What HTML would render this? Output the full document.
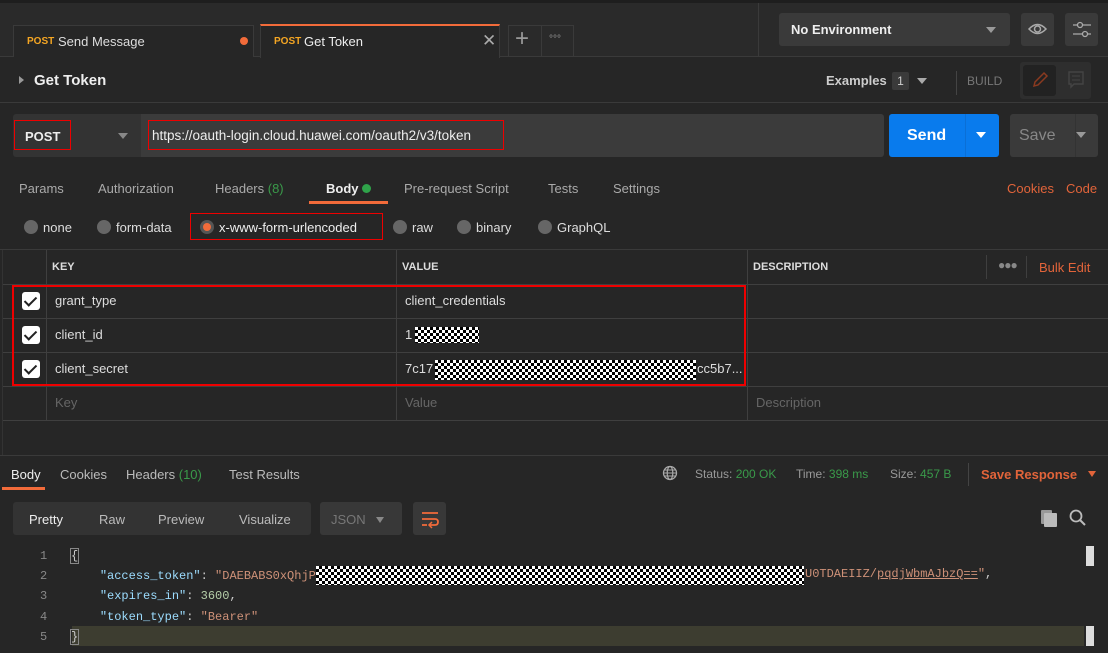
<!DOCTYPE html>
<html><head><meta charset="utf-8"><style>
*{box-sizing:border-box;margin:0;padding:0}
body{width:1108px;height:653px;background:#262626;font-family:"Liberation Sans",sans-serif;font-size:13px;color:#ccc;position:relative;overflow:hidden}
.a{position:absolute}
.chk{background:repeating-conic-gradient(#000 0 25%,#fff 0 50%) 0 0/6px 6px}
.red{border:1.5px solid #e00;z-index:5}
.cb{width:18px;height:18px;background:#fff;border-radius:3px}
.cb:after{content:"";position:absolute;left:5px;top:2px;width:5px;height:10px;border:solid #222;border-width:0 2.5px 2.5px 0;transform:rotate(45deg)}
.rd{width:14px;height:14px;border-radius:50%;background:#666}
.mono{font-family:"Liberation Mono",monospace;font-size:12px}
</style></head><body>
<div class="a" style="left:0;top:0;width:1108px;height:57px;background:#2a2a2a;border-bottom:1px solid #3a3a3a"></div>
<div class="a" style="left:0;top:0;width:1108px;height:3px;background:#1e1e1e"></div>
<!-- tabs -->
<div class="a" style="left:13px;top:25px;width:241px;height:32px;background:#262626;border:1px solid #3a3a3a;border-bottom:0"></div>
<div class="a" style="left:27px;top:36px;font-size:10px;font-weight:bold;color:#f5a623">POST</div>
<div class="a" style="left:58px;top:34px;color:#ddd">Send Message</div>
<div class="a" style="left:240px;top:37px;width:8px;height:8px;border-radius:50%;background:#f26b3a"></div>
<div class="a" style="left:260px;top:24px;width:240px;height:34px;background:#262626;border-top:2px solid #f26b3a;border-left:1px solid #3a3a3a;border-right:1px solid #3a3a3a"></div>
<div class="a" style="left:274px;top:36px;font-size:10px;font-weight:bold;color:#f5a623">POST</div>
<div class="a" style="left:304px;top:34px;color:#eee">Get Token</div>
<div class="a" style="left:482px;top:31px;color:#aaa;font-size:17px">✕</div>
<div class="a" style="left:508px;top:25px;width:66px;height:32px;border:1px solid #3a3a3a;border-bottom:0"></div>
<div class="a" style="left:541px;top:25px;width:1px;height:32px;background:#3a3a3a"></div>
<div class="a" style="left:515px;top:25px;color:#999;font-size:24px;font-weight:300">+</div>
<div class="a" style="left:549px;top:34px;color:#999;font-size:10px">°°°</div>
<div class="a" style="left:758px;top:3px;width:1px;height:54px;background:#3a3a3a"></div>
<div class="a" style="left:779px;top:13px;width:231px;height:33px;background:#3a3a3a;border-radius:3px"></div>
<div class="a" style="left:791px;top:22px;color:#eee;font-weight:bold;font-size:13px">No Environment</div>
<div class="a" style="left:986px;top:27px;border:5px solid transparent;border-top:6px solid #999"></div>
<div class="a" style="left:1021px;top:13px;width:33px;height:33px;background:#3a3a3a;border-radius:3px"></div>
<svg class="a" style="left:1027px;top:20px" width="21" height="18"><path d="M2 9Q10.5 0 19 9Q10.5 18 2 9Z" fill="none" stroke="#aaa" stroke-width="1.5"/><circle cx="10.5" cy="9" r="3" fill="none" stroke="#aaa" stroke-width="1.5"/></svg>
<div class="a" style="left:1065px;top:13px;width:33px;height:33px;background:#3a3a3a;border-radius:3px"></div>
<svg class="a" style="left:1071px;top:20px" width="22" height="20"><path d="M2 5H20M2 14H20" stroke="#aaa" stroke-width="1.3"/><circle cx="9" cy="5" r="2.5" fill="#3a3a3a" stroke="#aaa" stroke-width="1.3"/><circle cx="14" cy="14" r="2.5" fill="#3a3a3a" stroke="#aaa" stroke-width="1.3"/></svg>
<!-- title -->
<div class="a" style="left:19px;top:76px;border:4px solid transparent;border-left:5px solid #999"></div>
<div class="a" style="left:34px;top:72px;color:#eee;font-weight:bold;font-size:15px">Get Token</div>
<div class="a" style="left:826px;top:73px;color:#ccc;font-weight:bold;font-size:13px">Examples</div>
<div class="a" style="left:892px;top:72px;width:17px;height:18px;background:#3a3a3a;border-radius:2px;color:#ccc;font-size:12px;text-align:center;line-height:18px">1</div>
<div class="a" style="left:917px;top:78px;border:5px solid transparent;border-top:6px solid #aaa"></div>
<div class="a" style="left:956px;top:71px;width:1px;height:24px;background:#444"></div>
<div class="a" style="left:967px;top:74px;color:#777;font-size:12px">BUILD</div>
<div class="a" style="left:1020px;top:62px;width:71px;height:37px;background:#2e2e2e;border-radius:3px"></div>
<div class="a" style="left:1023px;top:65px;width:33px;height:31px;background:#222;border-radius:3px"></div>
<svg class="a" style="left:1030px;top:70px" width="20" height="20"><path d="M4 16L5 12L14 3L17 6L8 15Z" fill="none" stroke="#8a3a20" stroke-width="1.5"/></svg>
<svg class="a" style="left:1067px;top:70px" width="18" height="20"><path d="M2 2H16V14H7L4 17V14H2Z" fill="none" stroke="#444" stroke-width="1.4"/><path d="M5 6H13M5 10H13" stroke="#444"/></svg>
<div class="a" style="left:0;top:102px;width:1108px;height:1px;background:#3a3a3a"></div>
<!-- url bar -->
<div class="a" style="left:13px;top:114px;width:128px;height:43px;background:#333;border-radius:3px 0 0 3px"></div>
<div class="a" style="left:141px;top:114px;width:743px;height:43px;background:#3b3b3b;border-radius:0 3px 3px 0"></div>
<div class="a red" style="left:14px;top:120px;width:57px;height:30px"></div>
<div class="a" style="left:25px;top:129px;color:#eee;font-weight:bold">POST</div>
<div class="a" style="left:118px;top:133px;border:5px solid transparent;border-top:6px solid #888"></div>
<div class="a red" style="left:148px;top:120px;width:356px;height:30px"></div>
<div class="a" style="left:152px;top:128px;color:#eee;font-size:13.5px">https://oauth-login.cloud.huawei.com/oauth2/v3/token</div>
<div class="a" style="left:889px;top:114px;width:110px;height:43px;background:#097bed;border-radius:3px"></div>
<div class="a" style="left:965px;top:114px;width:1px;height:43px;background:#0a6fd6"></div>
<div class="a" style="left:907px;top:127px;color:#fff;font-weight:bold;font-size:16px">Send</div>
<div class="a" style="left:976px;top:132px;border:5px solid transparent;border-top:6px solid #fff"></div>
<div class="a" style="left:1010px;top:114px;width:88px;height:43px;background:#3a3a3a;border-radius:3px"></div>
<div class="a" style="left:1075px;top:114px;width:1px;height:43px;background:#333"></div>
<div class="a" style="left:1019px;top:127px;color:#888;font-size:16px">Save</div>
<div class="a" style="left:1076px;top:132px;border:5px solid transparent;border-top:6px solid #999"></div>
<!-- req tabs -->
<div class="a" style="left:19px;top:181px;color:#aaa">Params</div>
<div class="a" style="left:98px;top:181px;color:#aaa">Authorization</div>
<div class="a" style="left:215px;top:181px;color:#aaa">Headers <span style="color:#3a9a4a">(8)</span></div>
<div class="a" style="left:326px;top:181px;color:#eee;font-weight:bold">Body</div>
<div class="a" style="left:362px;top:184px;width:9px;height:9px;border-radius:50%;background:#2fa34a"></div>
<div class="a" style="left:309px;top:201px;width:79px;height:3px;background:#f26b3a"></div>
<div class="a" style="left:404px;top:181px;color:#aaa">Pre-request Script</div>
<div class="a" style="left:548px;top:181px;color:#aaa">Tests</div>
<div class="a" style="left:613px;top:181px;color:#aaa">Settings</div>
<div class="a" style="left:1007px;top:181px;color:#e2643a">Cookies</div>
<div class="a" style="left:1066px;top:181px;color:#e2643a">Code</div>
<!-- radios -->
<div class="a rd" style="left:24px;top:220px"></div><div class="a" style="left:43px;top:220px;color:#ddd">none</div>
<div class="a rd" style="left:97px;top:220px"></div><div class="a" style="left:116px;top:220px;color:#ddd">form-data</div>
<div class="a red" style="left:190px;top:213px;width:193px;height:27px"></div>
<div class="a rd" style="left:200px;top:220px;background:#555"></div><div class="a" style="left:203px;top:223px;width:8px;height:8px;border-radius:50%;background:#f26b3a"></div>
<div class="a" style="left:219px;top:220px;color:#eee">x-www-form-urlencoded</div>
<div class="a rd" style="left:393px;top:220px"></div><div class="a" style="left:412px;top:220px;color:#ddd">raw</div>
<div class="a rd" style="left:457px;top:220px"></div><div class="a" style="left:476px;top:220px;color:#ddd">binary</div>
<div class="a rd" style="left:538px;top:220px"></div><div class="a" style="left:557px;top:220px;color:#ddd">GraphQL</div>
<!-- table -->
<div class="a" style="left:0;top:249px;width:1108px;height:1px;background:#3a3a3a"></div>
<div class="a" style="left:2px;top:284px;width:1106px;height:1px;background:#3f3f3f"></div>
<div class="a" style="left:2px;top:318px;width:1106px;height:1px;background:#3f3f3f"></div>
<div class="a" style="left:2px;top:352px;width:1106px;height:1px;background:#3f3f3f"></div>
<div class="a" style="left:2px;top:386px;width:1106px;height:1px;background:#3f3f3f"></div>
<div class="a" style="left:2px;top:420px;width:1106px;height:1px;background:#3f3f3f"></div>
<div class="a" style="left:46px;top:250px;width:1px;height:170px;background:#3f3f3f"></div>
<div class="a" style="left:396px;top:250px;width:1px;height:170px;background:#3f3f3f"></div>
<div class="a" style="left:747px;top:250px;width:1px;height:170px;background:#3f3f3f"></div>
<div class="a" style="left:2px;top:250px;width:1px;height:205px;background:#333"></div>
<div class="a" style="left:52px;top:261px;color:#ddd;font-size:11px;font-weight:bold">KEY</div>
<div class="a" style="left:402px;top:261px;color:#ddd;font-size:11px;font-weight:bold">VALUE</div>
<div class="a" style="left:753px;top:261px;color:#ddd;font-size:11px;font-weight:bold">DESCRIPTION</div>
<div class="a" style="left:986px;top:255px;width:1px;height:24px;background:#3f3f3f"></div>
<div class="a" style="left:998px;top:258px;color:#888;font-size:12px;letter-spacing:-1px">●●●</div>
<div class="a" style="left:1026px;top:256px;width:1px;height:22px;background:#3f3f3f"></div>
<div class="a" style="left:1039px;top:260px;color:#e2643a">Bulk Edit</div>
<div class="a cb" style="left:22px;top:292px"></div><div class="a" style="left:55px;top:293px;color:#ddd">grant_type</div><div class="a" style="left:405px;top:293px;color:#ddd">client_credentials</div>
<div class="a cb" style="left:22px;top:326px"></div><div class="a" style="left:55px;top:327px;color:#ddd">client_id</div><div class="a" style="left:405px;top:327px;color:#ddd">1</div>
<div class="a chk" style="left:415px;top:327px;width:64px;height:16px"></div>
<div class="a cb" style="left:22px;top:360px"></div><div class="a" style="left:55px;top:361px;color:#ddd">client_secret</div><div class="a" style="left:405px;top:361px;color:#ddd">7c17</div>
<div class="a chk" style="left:435px;top:360px;width:261px;height:20px"></div>
<div class="a" style="left:697px;top:361px;color:#ddd">cc5b7...</div>
<div class="a" style="left:12px;top:285px;width:734px;height:101px;border:2px solid #e00;z-index:10"></div>
<div class="a" style="left:55px;top:395px;color:#666">Key</div>
<div class="a" style="left:405px;top:395px;color:#666">Value</div>
<div class="a" style="left:756px;top:395px;color:#666">Description</div>
<!-- response -->
<div class="a" style="left:0;top:455px;width:1108px;height:1px;background:#3a3a3a"></div>
<div class="a" style="left:11px;top:467px;color:#eee">Body</div>
<div class="a" style="left:2px;top:487px;width:43px;height:3px;background:#f26b3a"></div>
<div class="a" style="left:60px;top:467px;color:#bbb">Cookies</div>
<div class="a" style="left:126px;top:467px;color:#bbb">Headers <span style="color:#3a9a4a">(10)</span></div>
<div class="a" style="left:229px;top:467px;color:#bbb">Test Results</div>
<svg class="a" style="left:662px;top:465px" width="16" height="16"><circle cx="8" cy="8" r="6.5" fill="none" stroke="#aaa" stroke-width="1.3"/><ellipse cx="8" cy="8" rx="2.8" ry="6.5" fill="none" stroke="#aaa" stroke-width="1.2"/><path d="M1.5 8H14.5M2.5 5H13.5M2.5 11H13.5" stroke="#aaa"/></svg>
<div class="a" style="left:695px;top:467px;font-size:12px;color:#999">Status: <span style="color:#3a9a4a">200 OK</span></div>
<div class="a" style="left:796px;top:467px;font-size:12px;color:#999">Time: <span style="color:#3a9a4a">398 ms</span></div>
<div class="a" style="left:890px;top:467px;font-size:12px;color:#999">Size: <span style="color:#3a9a4a">457 B</span></div>
<div class="a" style="left:968px;top:463px;width:1px;height:23px;background:#444"></div>
<div class="a" style="left:981px;top:467px;color:#e2643a;font-weight:bold">Save Response</div>
<div class="a" style="left:1088px;top:471px;border:4px solid transparent;border-top:6px solid #e2643a"></div>
<div class="a" style="left:13px;top:502px;width:298px;height:33px;background:#333;border-radius:3px"></div>
<div class="a" style="left:29px;top:512px;color:#eee">Pretty</div>
<div class="a" style="left:99px;top:512px;color:#bbb">Raw</div>
<div class="a" style="left:158px;top:512px;color:#bbb">Preview</div>
<div class="a" style="left:239px;top:512px;color:#bbb">Visualize</div>
<div class="a" style="left:320px;top:502px;width:82px;height:33px;background:#383838;border-radius:3px"></div>
<div class="a" style="left:331px;top:512px;color:#777">JSON</div>
<div class="a" style="left:376px;top:517px;border:4px solid transparent;border-top:6px solid #888"></div>
<div class="a" style="left:413px;top:502px;width:33px;height:33px;background:#383838;border-radius:3px"></div>
<svg class="a" style="left:419px;top:508px" width="22" height="22"><path d="M3 5H19M3 11H16Q19 11 19 14Q19 17 16 17H11M3 17H8" fill="none" stroke="#f26b3a" stroke-width="1.8"/><path d="M13 14L10 17L13 20" fill="none" stroke="#f26b3a" stroke-width="1.5"/></svg>
<div class="a" style="left:1041px;top:510px;width:11px;height:14px;background:#999;border-radius:1px"></div>
<div class="a" style="left:1044px;top:513px;width:13px;height:14px;background:#bbb;border-radius:1px"></div>
<svg class="a" style="left:1069px;top:509px" width="18" height="18"><circle cx="7" cy="7" r="5.5" fill="none" stroke="#bbb" stroke-width="1.8"/><path d="M11 11L16 16" stroke="#bbb" stroke-width="2"/></svg>
<!-- code -->
<div class="a" style="left:72px;top:626px;width:1012px;height:20px;background:#3d3d30"></div>
<div class="a" style="left:1086px;top:546px;width:8px;height:20px;background:#ddd"></div>
<div class="a" style="left:1086px;top:626px;width:8px;height:20px;background:#ddd"></div>
<div class="a mono" style="left:40px;top:546px;color:#888;line-height:20.2px">1<br>2<br>3<br>4<br>5</div>
<div class="a mono" style="left:71px;top:546px;line-height:20.2px;color:#ccc;white-space:pre"><span style="outline:1px solid #888">{</span>
    <span style="color:#9cdcfe">"access_token"</span>: <span style="color:#ce9178">"DAEBABS0xQhjP</span>
    <span style="color:#9cdcfe">"expires_in"</span>: <span style="color:#b5cea8">3600</span>,
    <span style="color:#9cdcfe">"token_type"</span>: <span style="color:#ce9178">"Bearer"</span>
<span style="outline:1px solid #888">}</span></div>
<div class="a chk" style="left:316px;top:566px;width:488px;height:19px"></div>
<div class="a mono" style="left:805px;top:567px;color:#ce9178;white-space:pre">U0TDAEIIZ/<span style="text-decoration:underline">pqdjWbmAJbzQ==</span>"<span style="color:#ccc">,</span></div>
</body></html>
